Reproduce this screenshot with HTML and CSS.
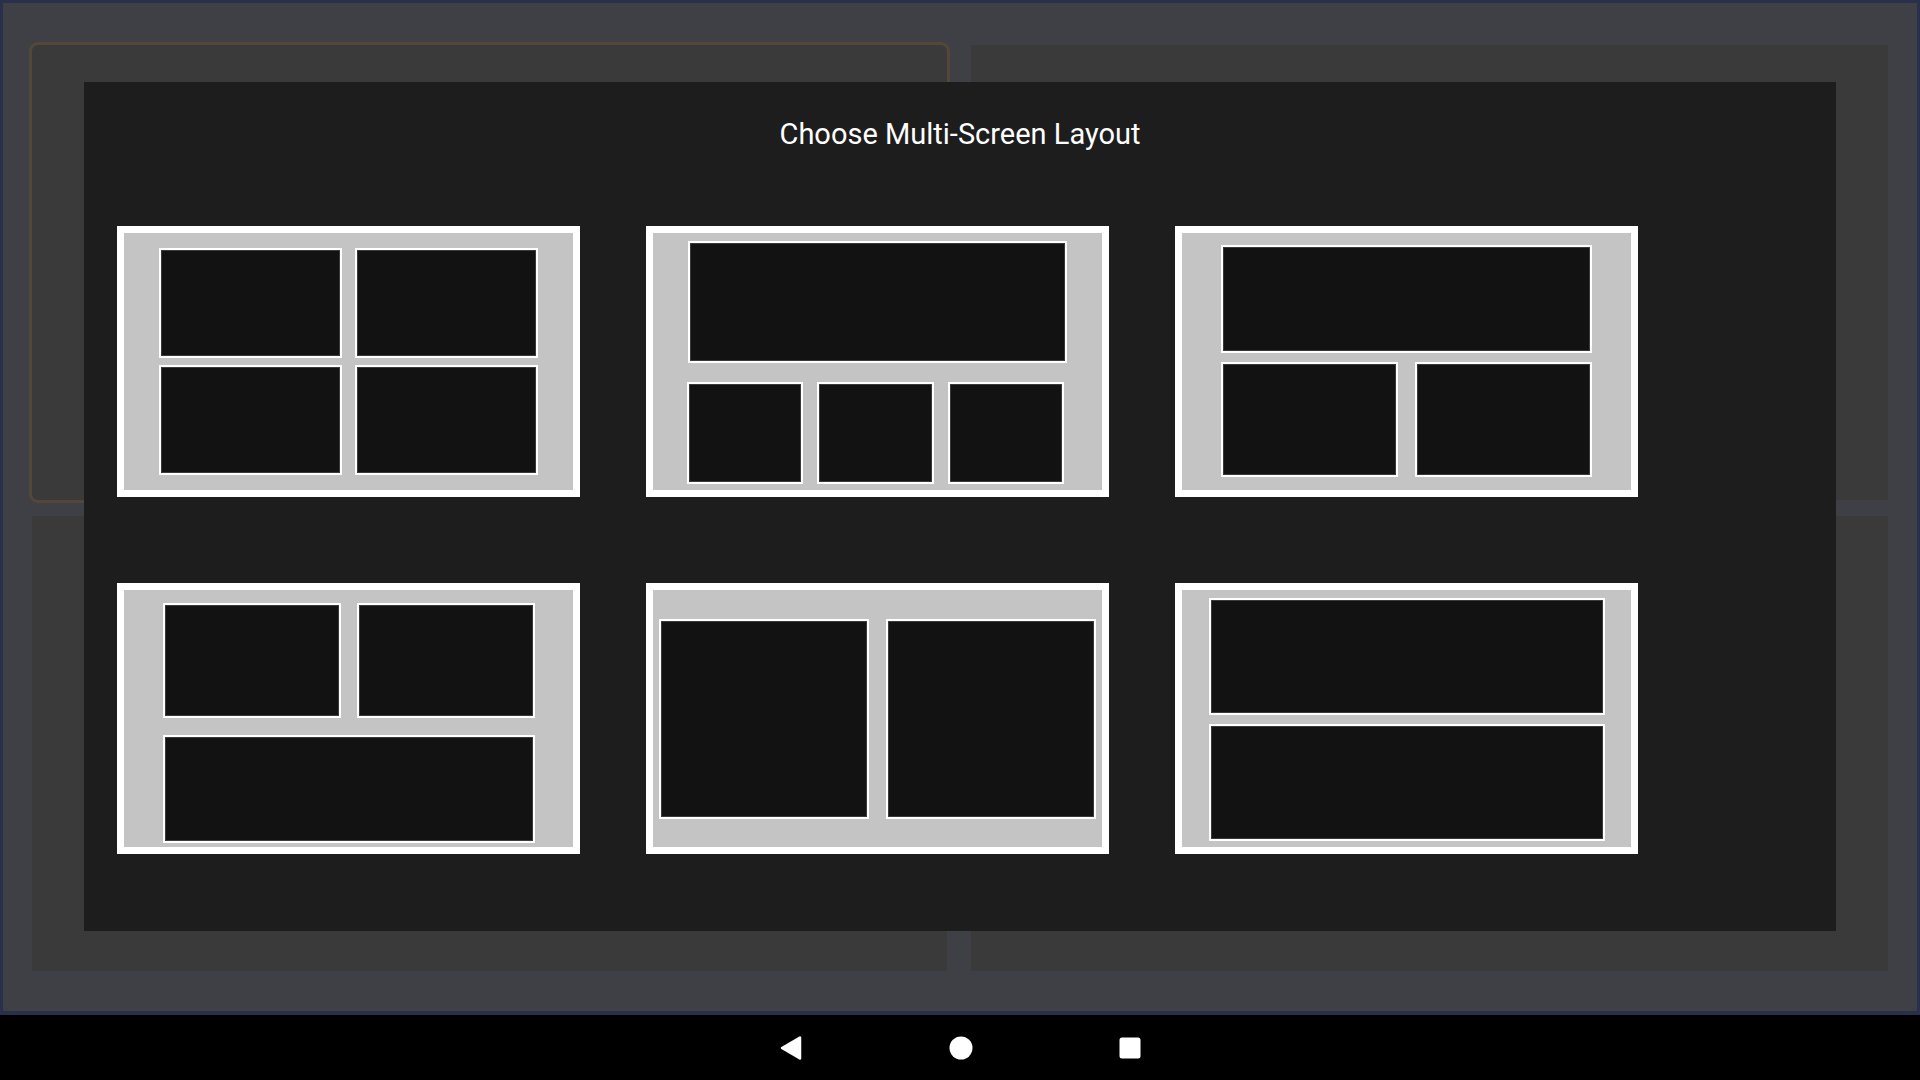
FILE: index.html
```html
<!DOCTYPE html>
<html>
<head>
<meta charset="utf-8">
<title>Choose Multi-Screen Layout</title>
<link rel="stylesheet" href="styles.css">
</head>
<body>
<div class="screen">
  <div class="app">
    <div class="panels">
      <div class="panel focused"></div>
      <div class="panel"></div>
      <div class="panel"></div>
      <div class="panel"></div>
    </div>
  </div>

  <div class="dialog">
    <h1 class="title">Choose Multi-Screen Layout</h1>
    <div class="cards">
      <div class="card">
        <div class="lay l1">
          <div class="row r1"><div class="scr"></div><div class="scr"></div></div>
          <div class="row r1"><div class="scr"></div><div class="scr"></div></div>
        </div>
      </div>
      <div class="card">
        <div class="lay l2">
          <div class="scr top"></div>
          <div class="row bottom"><div class="scr"></div><div class="scr"></div><div class="scr"></div></div>
        </div>
      </div>
      <div class="card">
        <div class="lay l3">
          <div class="scr top"></div>
          <div class="row bottom"><div class="scr"></div><div class="scr"></div></div>
        </div>
      </div>
      <div class="card">
        <div class="lay l4">
          <div class="row top"><div class="scr"></div><div class="scr"></div></div>
          <div class="scr bottom"></div>
        </div>
      </div>
      <div class="card">
        <div class="lay l5">
          <div class="scr"></div>
          <div class="scr"></div>
        </div>
      </div>
      <div class="card">
        <div class="lay l6">
          <div class="scr"></div>
          <div class="scr"></div>
        </div>
      </div>
    </div>
  </div>

  <div class="navbar">
    <svg class="nav-icon" width="24" height="26" viewBox="0 0 24 26"><path d="M3 13 L21 2.5 L21 23.5 Z" fill="#fff" stroke="#fff" stroke-width="2.5" stroke-linejoin="round"/></svg>
    <svg class="nav-icon" width="24" height="24" viewBox="0 0 24 24"><circle cx="12" cy="12" r="11.5" fill="#fff"/></svg>
    <svg class="nav-icon" width="22" height="22" viewBox="0 0 22 22"><rect x="0.5" y="0.5" width="21" height="21" rx="2.5" fill="#fff"/></svg>
  </div>
</div>
</body>
</html>
```

FILE: styles.css
```css
html, body {
  margin: 0;
  padding: 0;
  background: #000;
}

.screen {
  position: relative;
  width: 1920px;
  height: 1080px;
  overflow: hidden;
  font-family: Roboto, "Noto Sans", sans-serif;
}

.app {
  box-sizing: border-box;
  height: 1015px;
  background: #3e4046;
  border: 3px solid #2a2f4b;
  border-bottom-width: 4px;
}

.panels {
  display: grid;
  grid-template-columns: 915px 917px;
  grid-template-rows: 455px 455px;
  column-gap: 24px;
  row-gap: 16px;
  padding: 42px 29px 0 29px;
}

.panel {
  background: #3a3a3a;
}

.panel.focused {
  border-radius: 6px;
  box-shadow: 0 0 0 3px #54473a;
}

.dialog {
  position: absolute;
  left: 84px;
  top: 82px;
  width: 1752px;
  height: 849px;
  box-sizing: border-box;
  background: rgba(28, 28, 28, 0.97);
  padding: 32px 0 0 33px;
}

.title {
  margin: 0 0 0 -33px;
  height: 40px;
  line-height: 40px;
  font-size: 29px;
  font-weight: 400;
  color: #ffffff;
  text-align: center;
}

.cards {
  margin-top: 72px;
  display: grid;
  grid-template-columns: repeat(3, 463px);
  grid-auto-rows: 271px;
  column-gap: 66px;
  row-gap: 86px;
}

.card {
  box-sizing: border-box;
  width: 463px;
  height: 271px;
  border: 7px solid #ffffff;
  background: #c4c4c4;
}

.lay {
  box-sizing: border-box;
  height: 100%;
  display: flex;
  flex-direction: column;
}

.row {
  display: flex;
}

.scr {
  box-sizing: border-box;
  flex: 1;
  background: #121212;
  border: 2px solid #ffffff;
  box-shadow: inset 0 0 0 1px #3a3a3a;
}

/* 2 x 2 */
.l1 { padding: 15px 35px; gap: 7px; }
.l1 .r1 { flex: 1; gap: 13px; }

/* 1 top + 3 bottom */
.l2 { padding: 8px 35px 6px; gap: 19px; }
.l2 .top { flex: 0 0 122px; }
.l2 .bottom { flex: 0 0 102px; gap: 14px; margin-left: -1px; margin-right: 3px; }

/* 1 top + 2 bottom */
.l3 { padding: 12px 39px 13px; gap: 9px; }
.l3 .top { flex: 0 0 108px; }
.l3 .bottom { flex: 0 0 115px; gap: 17px; }

/* 2 top + 1 bottom */
.l4 { padding: 13px 38px 4px 39px; gap: 17px; }
.l4 .top { flex: 0 0 115px; gap: 16px; }
.l4 .bottom { flex: 0 0 108px; }

/* 2 side by side */
.l5 { flex-direction: row; padding: 29px 6px 28px; gap: 17px; }

/* 2 stacked */
.l6 { padding: 8px 26px 6px 27px; gap: 9px; }

.navbar {
  height: 65px;
  background: #000;
  display: flex;
  align-items: center;
  justify-content: center;
  gap: 146px;
  padding-top: 1px;
  box-sizing: border-box;
}

.nav-icon {
  display: block;
}
```
